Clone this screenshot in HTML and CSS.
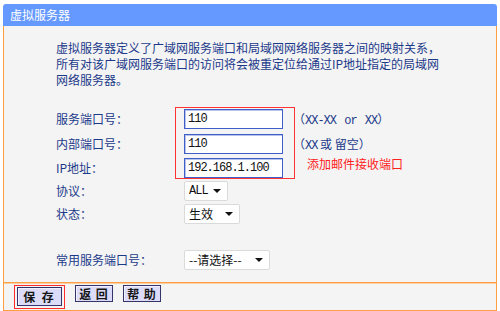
FILE: index.html
```html
<!DOCTYPE html>
<html lang="zh-CN">
<head>
<meta charset="utf-8">
<title>虚拟服务器</title>
<link rel="stylesheet" href="styles.css">
</head>
<body>
<div class="window">
  <div class="titlebar">虚拟服务器</div>
  <div class="content">
    <p class="desc">虚拟服务器定义了广域网服务端口和局域网网络服务器之间的映射关系，<br>所有对该广域网服务端口的访问将会被重定位给通过IP地址指定的局域网<br>网络服务器。</p>
    <div class="form">
      <div class="row">
        <span class="label">服务端口号：</span>
        <span class="input">110</span>
        <span class="hint">（<span class="lat">XX-XX or XX</span>）</span>
      </div>
      <div class="row">
        <span class="label">内部端口号：</span>
        <span class="input">110</span>
        <span class="hint">（<span class="lat">XX</span> 或 留空）</span>
      </div>
      <div class="row short">
        <span class="label">IP地址：</span>
        <span class="input">192.168.1.100</span>
        <span class="note">添加邮件接收端口</span>
      </div>
      <div class="row short">
        <span class="label">协议：</span>
        <span class="select w-all"><span class="lat">ALL</span><span class="caret"></span></span>
      </div>
      <div class="row short">
        <span class="label">状态：</span>
        <span class="select w-state"><span>生效</span><span class="caret"></span></span>
      </div>
      <div class="spacer"></div>
      <div class="row short">
        <span class="label">常用服务端口号：</span>
        <span class="select w-common"><span>--请选择--</span><span class="caret"></span></span>
      </div>
      <div class="annot-box"></div>
    </div>
  </div>
  <div class="footer">
    <span class="mark"><button class="btn btn-save">保 存</button></span>
    <button class="btn">返 回</button>
    <button class="btn">帮 助</button>
  </div>
</div>
</body>
</html>
```
FILE: styles.css
```css
body {
  margin: 0;
  background: #ffffff;
  font-family: "Noto Sans CJK SC", sans-serif;
  font-size: 12px;
}

.window {
  width: 494px;
  margin: 4px 0 0 3px;
}

.titlebar {
  height: 22px;
  line-height: 22px;
  background: #6699ff;
  color: #ffffff;
  padding-left: 7px;
  border-radius: 3px 3px 0 0;
  font-size: 12px;
}

.content {
  background: #f4f4f4;
  border-left: 1px solid #ff9f45;
  border-right: 1px solid #ff9f45;
  padding: 14px 0 11px 52px;
  color: #1c3a8a;
}

.desc {
  margin: 0;
  line-height: 16px;
  white-space: nowrap;
}

.form {
  position: relative;
  margin-top: 18px;
}

.row {
  display: flex;
  align-items: center;
  height: 25px;
}

.row.short {
  height: 23px;
}

.spacer {
  height: 23px;
}

.label {
  width: 128px;
  flex: none;
  white-space: nowrap;
}

.lat {
  font-family: "Liberation Mono", monospace;
  font-size: 12px;
  letter-spacing: -1px;
  word-spacing: 2px;
}

.input {
  box-sizing: border-box;
  width: 99px;
  height: 20px;
  flex: none;
  background: #ffffff;
  border: 1px solid #3f5fc8;
  box-shadow: inset 1px 1px 0 #b7c3ea;
  padding-left: 3px;
  line-height: 18px;
  color: #111111;
  font-family: "Liberation Mono", monospace;
  font-size: 12px;
  letter-spacing: -1px;
}

.hint {
  margin-left: 10px;
  white-space: nowrap;
}

.note {
  align-self: flex-start;
  margin-left: 24px;
  line-height: 16px;
  color: #ff2020;
  white-space: nowrap;
}

.select {
  box-sizing: border-box;
  display: flex;
  align-items: center;
  justify-content: space-between;
  height: 20px;
  background: #ffffff;
  border: 1px solid #dadada;
  border-radius: 2px;
  padding: 0 6px 0 4px;
  color: #111111;
  white-space: nowrap;
}

.w-all { width: 44px; }
.w-state { width: 56px; }
.w-common { width: 86px; }

.caret {
  width: 0;
  height: 0;
  border-left: 4px solid transparent;
  border-right: 4px solid transparent;
  border-top: 4px solid #111111;
}

.annot-box {
  position: absolute;
  left: 119px;
  top: 1px;
  width: 120px;
  height: 72px;
  box-sizing: border-box;
  border: 1px solid #ff3333;
}

.footer {
  display: flex;
  align-items: flex-start;
  height: 25px;
  background: #f4f4f4;
  border: 1px solid #ff9f45;
  box-shadow: inset 0 1px 0 #ffcf9f;
  padding: 2px 0 0 10px;
  box-sizing: content-box;
}

.mark {
  display: flex;
  border: 1px solid #ff2a2a;
  padding: 0 2px 2px 2px;
}

.btn {
  box-sizing: border-box;
  width: 38px;
  height: 17px;
  margin: 0 0 0 10px;
  padding: 0;
  background: #dcdcfa;
  border: 1px solid #34346a;
  box-shadow: inset 1px 1px 0 #f2f2ff;
  color: #151515;
  font-family: "Noto Sans CJK SC", sans-serif;
  font-size: 12px;
  font-weight: bold;
  line-height: 15px;
  letter-spacing: 1px;
}

.btn-save {
  width: 45px;
  height: 19px;
  margin: 1px 0 0 0;
  line-height: 17px;
  letter-spacing: 2px;
}
```
